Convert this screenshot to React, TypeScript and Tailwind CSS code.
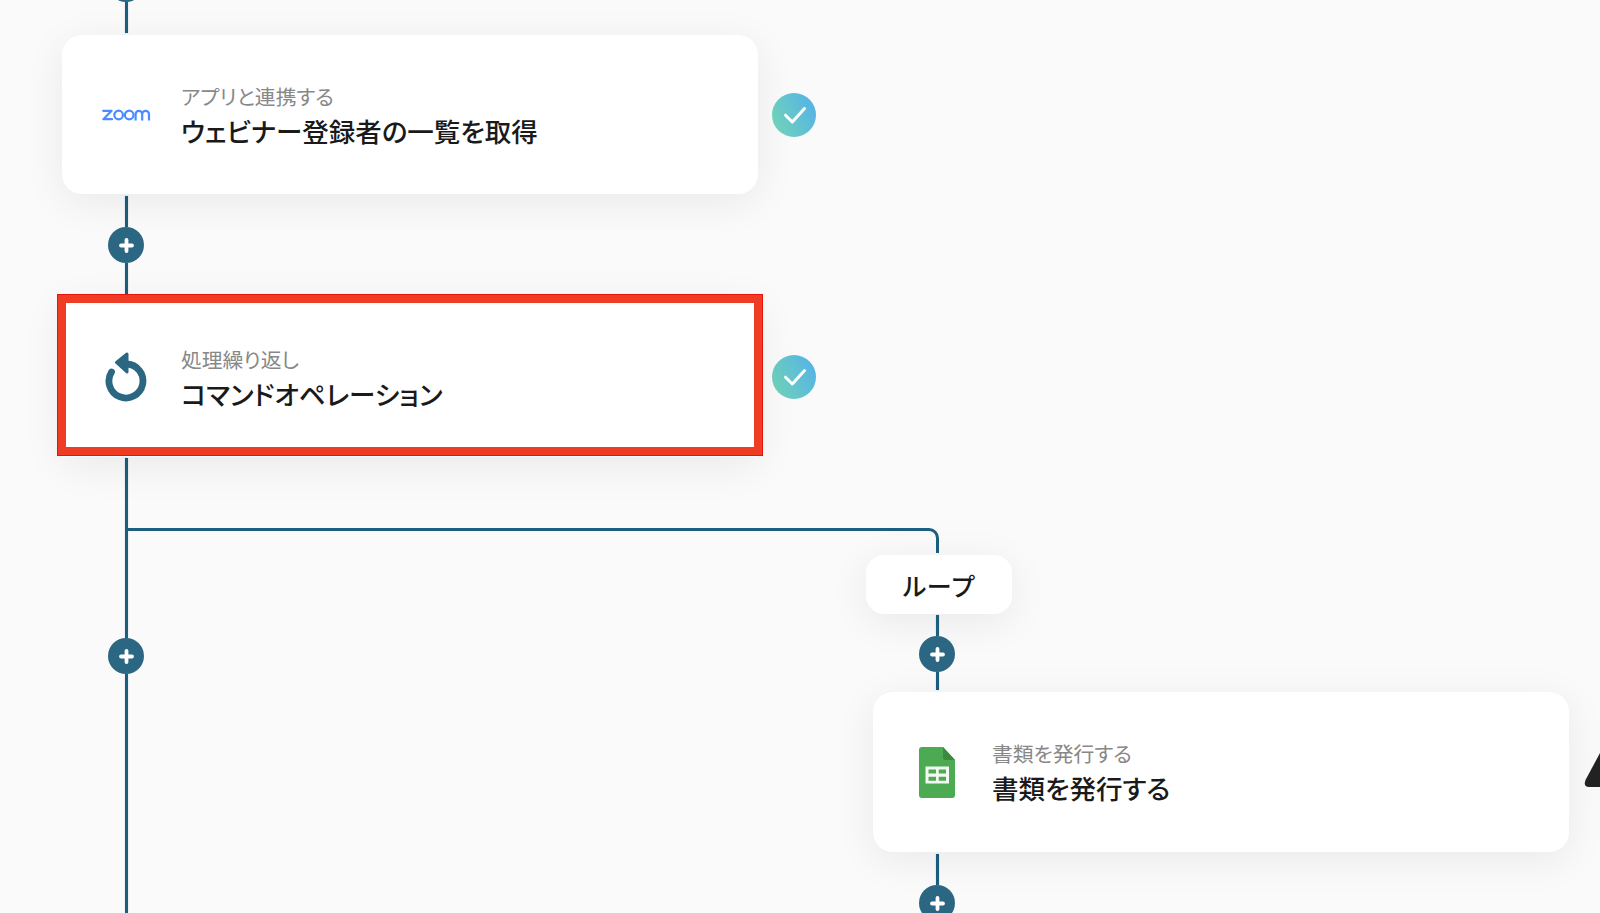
import React from "react";

const FONT = "font-['Noto_Sans_CJK_JP','Noto_Sans',sans-serif]";

const Line = ({ height, className = "" }: { height: string; className?: string }) => (
  <div className={`w-[3px] bg-[#1b5e7d] shadow-[0_0_1px_rgba(27,94,125,0.6)] ${height} ${className}`} />
);

const PlusButton = ({ className = "" }: { className?: string }) => (
  <div className={`relative z-10 flex h-9 w-9 items-center justify-center rounded-full bg-[#2b6782] ${className}`}>
    <svg width="15" height="15" viewBox="0 0 15 15" fill="none" stroke="#fff" strokeWidth="3.8" strokeLinecap="round">
      <path d="M7.5 2v11M2 7.5h11" />
    </svg>
  </div>
);

const ZoomLogo = () => (
  <svg width="49" height="12" viewBox="0 0 49 12" fill="none" stroke="#4a8cff" strokeWidth="2.2" className="mt-[1px]">
    <path d="M1.2 1.8h8.4L1.4 10.2H10" strokeLinejoin="round" strokeLinecap="round" />
    <circle cx="16.6" cy="6" r="4.3" />
    <circle cx="27.2" cy="6" r="4.3" />
    <path d="M33.6 11.4V5.2a3 3 0 0 1 6.6 0V11.4M40.2 5.2a3 3 0 0 1 6.8 0V11.4" />
  </svg>
);

const RepeatIcon = () => (
  <svg width="44" height="50" viewBox="0 0 44 50" fill="none" className="-mt-[2px]">
    <path d="M22 12A17 17 0 1 1 6.5 20" stroke="#2b6782" strokeWidth="6.8" strokeLinecap="round" />
    <path d="M11.5 10.5L22 2V20Z" fill="#2b6782" stroke="#2b6782" strokeWidth="3" strokeLinejoin="round" />
  </svg>
);

const SheetsIcon = () => (
  <svg width="36" height="51" viewBox="0 0 36 51" className="-ml-[1px]">
    <path d="M3 0H24L36 13V48a3 3 0 0 1-3 3H3a3 3 0 0 1-3-3V3a3 3 0 0 1 3-3Z" fill="#4caa52" />
    <path d="M24 0L36 13H27a3 3 0 0 1-3-3Z" fill="#3a8a3f" />
    <path d="M6.5 19.5H30V36.5H6.5ZM9.5 22.5V26.5H17V22.5ZM19.7 22.5V26.5H27V22.5ZM9.5 29.7V33.7H17V29.7ZM19.7 29.7V33.7H27V29.7Z" fill="#f3f8f3" fillRule="evenodd" />
  </svg>
);

const DoneBadge = ({ className = "" }: { className?: string }) => (
  <div className={`flex h-11 w-11 shrink-0 items-center justify-center rounded-full bg-[linear-gradient(65deg,#74d6b4,#52b0ea)] ${className}`}>
    <svg width="44" height="44" viewBox="0 0 44 44" fill="none" stroke="#fff" strokeWidth="3" strokeLinecap="round" strokeLinejoin="round">
      <path d="M13.5 22.2L20.3 29L32.5 15.5" />
    </svg>
  </div>
);

type CardProps = {
  icon: React.ReactNode;
  label: string;
  title: string;
  square?: boolean;
  height?: string;
};

const Card = ({ icon, label, title, square, height = "h-[159px]" }: CardProps) => (
  <div
    className={`flex w-[696px] shrink-0 items-center bg-white pl-[40px] shadow-[0_8px_40px_rgba(0,0,0,0.07)] ${height} ${
      square ? "" : "rounded-[20px]"
    }`}
  >
    <div className="flex w-[49px] justify-center">{icon}</div>
    <div className="ml-[30px] flex flex-col pt-[1px] [font-feature-settings:'palt']">
      <span className="text-[20.8px] leading-[28px] text-[#888888]">{label}</span>
      <span className="mt-[3px] text-[26.5px] leading-[36px] font-medium text-[#1a1a1a]">{title}</span>
    </div>
  </div>
);

export default function App() {
  return (
    <div className={`h-[913px] w-[1600px] overflow-hidden bg-[#fafafa] ${FONT}`}>
      {/* top stretch */}
      <PlusButton className="-mt-[34px] ml-[108px]" />
      <Line height="h-[31px]" className="ml-[125px]" />

      <div className="mt-[2px] ml-[62px] flex items-center gap-[14px]">
        <Card icon={<ZoomLogo />} label="アプリと連携する" title="ウェビナー登録者の一覧を取得" />
        <DoneBadge />
      </div>

      <Line height="h-[31px]" className="mt-[2px] ml-[125px]" />
      <PlusButton className="ml-[108px]" />
      <Line height="h-[35px]" className="ml-[125px]" />

      <div className="ml-[62px] flex items-center gap-[14px]">
        <div className="relative">
          <Card icon={<RepeatIcon />} label="処理繰り返し" title="コマンドオペレーション" square />
          {/* highlight frame drawn over the card */}
          <div className="absolute -top-[3px] -left-[4px] h-[160px] w-[704px] border-[8px] border-[#ee3d24] shadow-[0_0_0_1px_#e8140c]" />
        </div>
        <DoneBadge className="-mt-[2px]" />
      </div>

      <div className="mt-[1px] flex">
        {/* main line */}
        <div className="w-[144px] shrink-0">
          <Line height="h-[180px]" className="ml-[125px]" />
          <PlusButton className="ml-[108px]" />
          <Line height="h-[239px]" className="ml-[125px]" />
        </div>

        {/* loop branch */}
        <div className="w-[1456px] shrink-0 pt-[70px]">
          <div className="-ml-[17px] h-[25px] w-[812px] rounded-tr-[10px] border-t-[3px] border-r-[3px] border-[#1b5e7d]" />
          <div className="mt-[2px] ml-[722px] flex h-[59px] w-[146px] items-center justify-center rounded-[18px] bg-white pt-[2px] pr-[1px] text-[25px] font-medium text-[#1a1a1a] shadow-[0_8px_40px_rgba(0,0,0,0.07)]">
            ループ
          </div>
          <Line height="h-[21px]" className="mt-[1px] ml-[792px]" />
          <PlusButton className="ml-[775px]" />
          <Line height="h-[18px]" className="ml-[792px]" />
          <div className="mt-[2px] ml-[729px] flex items-start gap-[15px]">
            <Card icon={<SheetsIcon />} label="書類を発行する" title="書類を発行する" height="h-[160px]" />
            <svg className="mt-[61px] shrink-0" width="16" height="34" viewBox="0 0 16 34">
              <path d="M16 0L1.5 27Q-1 34 5 34H16Z" fill="#222" />
            </svg>
          </div>
          <Line height="h-[31px]" className="mt-[2px] ml-[792px]" />
          <PlusButton className="ml-[775px]" />
        </div>
      </div>
    </div>
  );
}
